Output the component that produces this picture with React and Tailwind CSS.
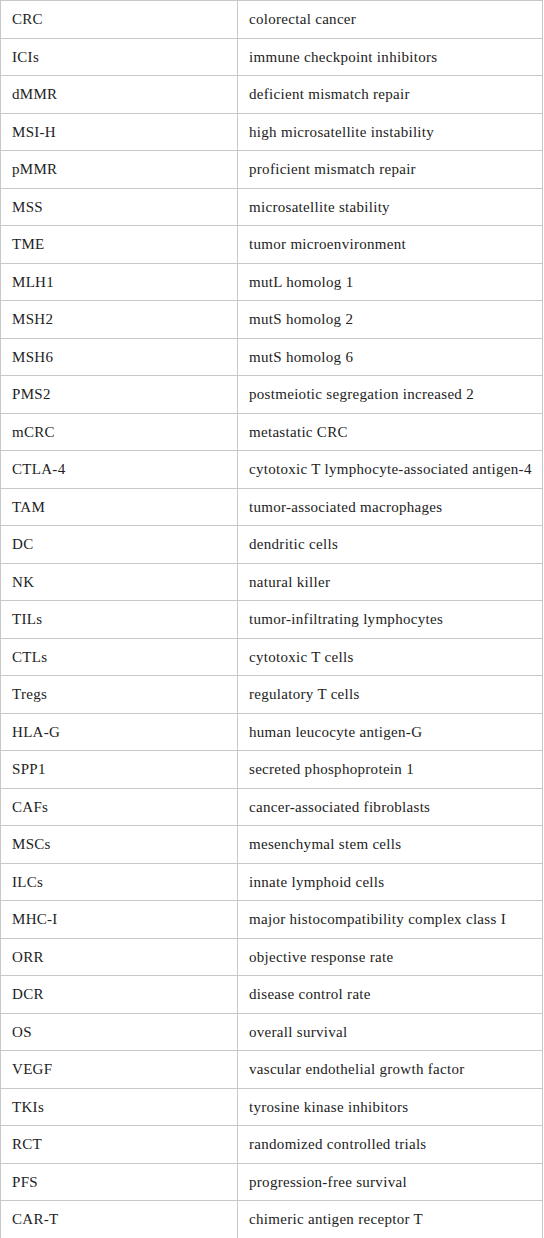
import React from "react";

const rows = [
  ["CRC", "colorectal cancer"],
  ["ICIs", "immune checkpoint inhibitors"],
  ["dMMR", "deficient mismatch repair"],
  ["MSI-H", "high microsatellite instability"],
  ["pMMR", "proficient mismatch repair"],
  ["MSS", "microsatellite stability"],
  ["TME", "tumor microenvironment"],
  ["MLH1", "mutL homolog 1"],
  ["MSH2", "mutS homolog 2"],
  ["MSH6", "mutS homolog 6"],
  ["PMS2", "postmeiotic segregation increased 2"],
  ["mCRC", "metastatic CRC"],
  ["CTLA-4", "cytotoxic T lymphocyte-associated antigen-4"],
  ["TAM", "tumor-associated macrophages"],
  ["DC", "dendritic cells"],
  ["NK", "natural killer"],
  ["TILs", "tumor-infiltrating lymphocytes"],
  ["CTLs", "cytotoxic T cells"],
  ["Tregs", "regulatory T cells"],
  ["HLA-G", "human leucocyte antigen-G"],
  ["SPP1", "secreted phosphoprotein 1"],
  ["CAFs", "cancer-associated fibroblasts"],
  ["MSCs", "mesenchymal stem cells"],
  ["ILCs", "innate lymphoid cells"],
  ["MHC-I", "major histocompatibility complex class I"],
  ["ORR", "objective response rate"],
  ["DCR", "disease control rate"],
  ["OS", "overall survival"],
  ["VEGF", "vascular endothelial growth factor"],
  ["TKIs", "tyrosine kinase inhibitors"],
  ["RCT", "randomized controlled trials"],
  ["PFS", "progression-free survival"],
  ["CAR-T", "chimeric antigen receptor T"],
];

export default function App() {
  return (
    <div className="bg-white w-[544px] min-h-[1238px] font-['Liberation_Serif','Times_New_Roman',serif]">
      <table className="w-[543px] border-collapse text-[15px] text-[#222] tracking-[0.3px] font-['Liberation_Serif','Times_New_Roman',serif]">
        <colgroup>
          <col className="w-[237px]" />
          <col />
        </colgroup>
        <tbody>
          {rows.map(([a, b]) => (
            <tr key={a} className="h-[37.5px]">
              <td className="border border-[#c8c8c8] pl-[11px] py-0 align-middle">{a}</td>
              <td className="border border-[#c8c8c8] pl-[11px] py-0 align-middle">{b}</td>
            </tr>
          ))}
        </tbody>
      </table>
    </div>
  );
}
